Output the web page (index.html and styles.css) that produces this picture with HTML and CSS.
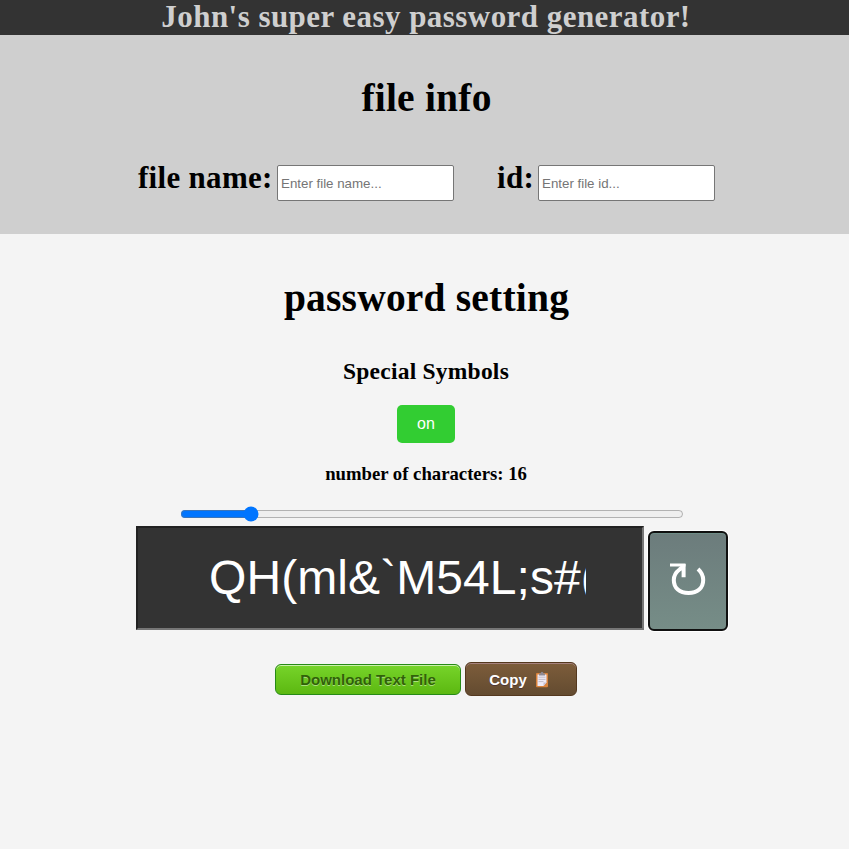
FILE: index.html
```html
<!DOCTYPE html>
<html lang="en">
<head>
<meta charset="utf-8">
<title>Password generator</title>
<link rel="stylesheet" href="styles.css">
</head>
<body>
<header class="banner"><h1 class="banner-title">John's super easy password generator!</h1></header>
<section class="file-info">
  <h2 class="heading">file info</h2>
  <div class="fields">
    <label class="field"><span class="label label-name">file name:</span><input class="text-input" type="text" placeholder="Enter file name..."></label>
    <label class="field"><span class="label label-id">id:</span><input class="text-input" type="text" placeholder="Enter file id..."></label>
  </div>
</section>
<main class="settings">
  <h2 class="heading">password setting</h2>
  <h3 class="symbols">Special Symbols</h3>
  <button class="toggle" type="button">on</button>
  <h4 class="count">number of characters: 16</h4>
  <input class="slider" type="range" min="1" max="113" value="15.5" step="0.1">
  <div class="output">
    <input class="password" type="text" readonly value="QH(ml&amp;`M54L;s#(x">
    <button class="refresh" type="button" aria-label="Regenerate">
      <svg width="40" height="40" viewBox="0 0 40 40" fill="none" stroke="#fff">
        <path stroke-width="3" d="M2 4H17.5" />
        <path stroke-width="4" d="M15.6 3V16.3M15 5.5L11.5 8.5C7.5 11.5 5.8 15 5.8 19C5.8 27 11.5 32 20.5 32C29.5 32 35.2 27 35.2 19C35.2 14.5 33.3 11 30 8" />
      </svg>
    </button>
  </div>
  <div class="actions">
    <button class="action download" type="button">Download Text File</button>
    <button class="action copy" type="button"><span>Copy</span>
      <svg width="14" height="17" viewBox="0 0 14 17">
        <rect x="1" y="2" width="12" height="14.3" rx="1" fill="#d9823b"/>
        <path d="M2.5 3.5h9v8l-3 3.5h-6z" fill="#eeeaf5"/>
        <path d="M8.5 15v-3.5h3z" fill="#c5bed2"/>
        <path d="M3.5 6.2h7M3.5 8.4h7M3.5 10.6h5" stroke="#b6b0bd" stroke-width=".8"/>
        <path d="M4 4.5v-2h1.5Q5.7.7 7 .7t1.5 1.8H10v2z" fill="#8d8993"/>
      </svg>
    </button>
  </div>
</main>
</body>
</html>
```

FILE: styles.css
```css
* { box-sizing: border-box; }
body { margin: 0; min-height: 849px; background: #f4f4f4; font-family: "Liberation Serif", "Times New Roman", serif; font-variant-ligatures: none; color: #000; overflow: hidden; }
h1, h2, h3, h4 { margin: 0; white-space: nowrap; }
.banner { height: 35px; background: #333; color: #cfcfcf; text-align: center; padding-left: 3px; }
.banner-title { font-size: 31px; line-height: 34px; letter-spacing: .45px; }
.file-info { height: 199px; background: #cfcfcf; padding-top: 41px; }
.heading { font-size: 39.5px; line-height: 44px; letter-spacing: .2px; text-align: center; padding-left: 4px; }
.fields { display: flex; justify-content: center; gap: 43px; padding: 45px 0 0 4px; }
.field { display: flex; gap: 4px; }
.label { font-size: 31px; font-weight: bold; line-height: 26px; letter-spacing: .3px; white-space: nowrap; }
.label-name { width: 135px; }
.label-id { width: 37px; }
.text-input { width: 177px; height: 36px; margin: 0; border: 1px solid #767676; border-radius: 2px; padding: 1px 3px; background: #fff; font: 13.333px "Liberation Sans", Arial, sans-serif; }
.text-input::placeholder { letter-spacing: -.01px; }
.settings { display: flex; flex-direction: column; align-items: center; padding-top: 42px; }
.symbols { font-size: 23.5px; line-height: 26px; letter-spacing: .23px; margin-top: 38px; padding-left: 3px; }
.toggle { width: 58px; height: 38px; margin: 21px 0 0 3px; padding: 0; border: 0; border-radius: 5px; background: #32cd32; color: #fff; font: 16px "Liberation Sans", Arial, sans-serif; }
.count { font-size: 18.72px; line-height: 20px; margin-top: 21px; padding-left: 3px; }
.slider { width: 504px; height: 16px; margin: 22px 0 0 14px; accent-color: #0075ff; }
.output { display: flex; gap: 4px; margin: 4px 0 0 15px; }
.password { width: 508px; height: 104px; margin: 0; padding: 0 56px 1px 71px; border: 2px solid; border-color: #212121 #767676 #767676 #212121; border-radius: 0; background: #333; color: #fff; font: 48px "Liberation Sans", Arial, sans-serif; letter-spacing: .08px; outline: 0; }
.refresh { width: 80px; height: 100px; margin-top: 5px; padding: 0; border: 2px solid #101010; border-radius: 6px; background: linear-gradient(#6c7c7c, #768d87); box-shadow: inset 0 1px #6e8c86, 0 0 0 1px #fff; display: flex; align-items: center; justify-content: center; }
.actions { display: flex; gap: 4px; align-items: center; margin: 31px 0 0 3px; }
.action { padding: 0; border: 1px solid; border-radius: 6px; font: bold 15px "Liberation Sans", Arial, sans-serif; }
.download { width: 186px; height: 31px; background: linear-gradient(#77d42a, #5cb811); border-color: #268a16; color: #306108; text-shadow: 0 1px #aade7c; box-shadow: inset 0 1px #caefab; }
.copy { display: flex; align-items: center; justify-content: center; gap: 8px; width: 112px; height: 34px; padding-right: 4px; background: linear-gradient(#7d5d3b, #634b30); border-color: #54381e; color: #fff; text-shadow: 0 1px #4d3534; box-shadow: inset 0 1px #a6827e; }
```
